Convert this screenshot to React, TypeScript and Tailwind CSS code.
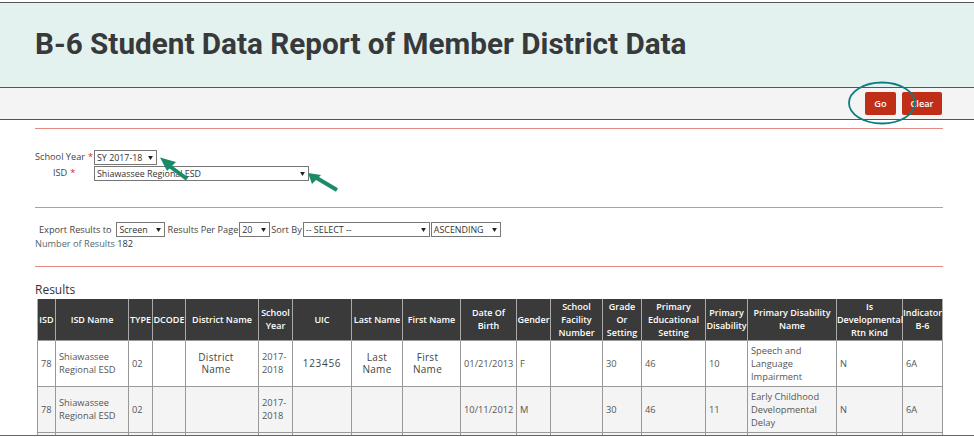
import React from "react";

const cols = [
  { label: "ISD", w: "w-[18px]" },
  { label: "ISD Name", w: "w-[73px]" },
  { label: "TYPE", w: "w-[24px]" },
  { label: "DCODE", w: "w-[33px]" },
  { label: "District Name", w: "w-[73px]" },
  { label: "School Year", w: "w-[34px]" },
  { label: "UIC", w: "w-[59px]" },
  { label: "Last Name", w: "w-[51px]" },
  { label: "First Name", w: "w-[58px]" },
  { label: "Date Of Birth", w: "w-[56px]" },
  { label: "Gender", w: "w-[34px]" },
  { label: "School Facility Number", w: "w-[52px]" },
  { label: "Grade Or Setting", w: "w-[39px]" },
  { label: "Primary Educational Setting", w: "w-[64px]" },
  { label: "Primary Disability", w: "w-[42px]" },
  { label: "Primary Disability Name", w: "w-[89px]" },
  { label: "Is Developmental Rtn Kind", w: "w-[66px]" },
  { label: "Indicator B-6", w: "w-[40px]" },
];

const rows = [
  ["78", "Shiawassee Regional ESD", "02", "", "District Name", "2017-2018", "123456", "Last Name", "First Name", "01/21/2013", "F", "", "30", "46", "10", "Speech and Language Impairment", "N", "6A"],
  ["78", "Shiawassee Regional ESD", "02", "", "", "2017-2018", "", "", "", "10/11/2012", "M", "", "30", "46", "11", "Early Childhood Developmental Delay", "N", "6A"],
  ["", "", "", "", "", "", "", "", "", "", "", "", "", "", "", "", "", ""],
];

const cellBase = "border border-[#999] ";

// these columns were typed in by hand, so they sit centred in a different style
function cellClass(j: number) {
  if (j === 4) return cellBase + "pl-[3px] pr-[15px] text-center text-[10px] leading-[12px] tracking-[0.3px] text-[#444]";
  if (j === 6) return cellBase + "px-[3px] text-center text-[10px] leading-[12px] tracking-[0.7px] text-[#444]";
  if (j === 7) return cellBase + "px-[3px] text-center text-[10px] leading-[12px] tracking-[0.3px] text-[#444]";
  if (j === 8) return cellBase + "pl-[3px] pr-[11px] text-center text-[10px] leading-[12px] tracking-[0.3px] text-[#444]";
  return cellBase + "px-[3px] text-[9.3px] leading-[13px] text-[#555]";
}

function Select({ value, w }: { value: string; w: string }) {
  return (
    <div className={`${w} h-[15px] flex items-center justify-between border border-[#777] bg-white pl-[2px] pr-[3px] text-[8.9px] text-[#333] shrink-0`}>
      <span className="whitespace-nowrap">{value}</span>
      <svg width="5" height="4" viewBox="0 0 6 5"><path d="M0 0h6L3 5z" fill="#222" /></svg>
    </div>
  );
}

function Req() {
  return <span className="text-[#e01b1b] ml-[3px]">*</span>;
}

export default function App() {
  return (
    <div className="relative w-[974px] h-[437px] overflow-hidden bg-white text-[9.2px] text-[#444] font-['Open_Sans',sans-serif]">
      <div className="mt-[2px] h-[86px] border-y border-[#555] bg-[#e3f2ef] pl-[35px] flex items-center">
        <h1 className="text-[29.7px] font-bold text-[#37393a] font-['Roboto',sans-serif] pb-[2px]">
          B-6 Student Data Report of Member District Data
        </h1>
      </div>
      <div className="h-[32px] border-b border-[#555] bg-[#f4f4f4] flex items-center justify-end gap-[6px] pr-[32px]">
        <div className="w-[31px] h-[23px] rounded-[2px] bg-[#c12e17] text-white font-semibold flex items-center justify-center">Go</div>
        <div className="w-[40px] h-[23px] rounded-[2px] bg-[#c12e17] text-white font-semibold flex items-center justify-center">Clear</div>
      </div>

      <div className="pl-[35px] pr-[31px]">
        <div className="mt-[8px] border-t border-[#e58a80]" />

        <div className="mt-[21px] flex flex-col gap-[1px]">
          <div className="flex items-center h-[15px]">
            <div className="w-[59px] pb-[2px] whitespace-nowrap">School Year<Req /></div>
            <Select value="SY 2017-18" w="w-[63px]" />
          </div>
          <div className="flex items-center h-[15px]">
            <div className="w-[59px] pl-[18px] pb-[2px] whitespace-nowrap">ISD<Req /></div>
            <Select value="Shiawassee Regional ESD" w="w-[215px]" />
          </div>
        </div>

        <div className="mt-[26px] border-t border-[#e58a80]" />

        <div className="mt-[14px] pl-[4px] flex items-center gap-[1px] whitespace-nowrap">
          <span className="mr-[4px]">Export Results to</span>
          <Select value="Screen" w="w-[49px]" />
          <span className="ml-[1px]">Results Per Page</span>
          <Select value="20" w="w-[31px]" />
          <span>Sort By</span>
          <Select value="-- SELECT --" w="w-[127px]" />
          <Select value="ASCENDING" w="w-[70px]" />
        </div>
        <div className="h-[14px] leading-[14px] text-[#55686b]">
          Number of Results <span className="text-[#333]">182</span>
        </div>

        <div className="mt-[15px] border-t border-[#e58a80]" />

        <div className="mt-[15px] h-[16px] text-[12px] leading-[16px] text-[#333]">Results</div>
      </div>

      <div className="ml-[37px] mt-[1px] h-[136px] overflow-hidden">
        <table className="table-fixed w-[906px] border-collapse">
          <colgroup>
            {cols.map((c) => <col key={c.label} className={c.w} />)}
          </colgroup>
          <thead>
            <tr className="h-[41px]">
              {cols.map((c) => (
                <th key={c.label} className="border-x border-[#aaa] bg-[#3a3a3a] px-0 text-center text-[9px] leading-[13px] font-semibold text-white">
                  {c.label}
                </th>
              ))}
            </tr>
          </thead>
          <tbody>
            {rows.map((r, i) => (
              <tr key={i} className={i === 0 ? "h-[46px] bg-white" : "h-[46px] bg-[#f4f4f4]"}>
                {r.map((v, j) => (
                  <td key={j} className={cellClass(j)}>{v}</td>
                ))}
              </tr>
            ))}
          </tbody>
        </table>
      </div>
      <div className="border-t border-[#666]" />

      {/* annotations drawn over the page */}
      <svg className="absolute left-0 top-0 pointer-events-none" width="974" height="437" viewBox="0 0 974 437" fill="none">
        <ellipse cx="882" cy="103" rx="33" ry="20.5" stroke="#0f7c80" strokeWidth="1.8" />
        <path d="M187 179 L168 165" stroke="#1b8a68" strokeWidth="4" />
        <path d="M160 157.5 L176 162 L167 171 Z" fill="#1b8a68" />
        <path d="M337 190 L315 177" stroke="#1b8a68" strokeWidth="4" />
        <path d="M308 173 L321 175 L312 184 Z" fill="#1b8a68" />
      </svg>
    </div>
  );
}
